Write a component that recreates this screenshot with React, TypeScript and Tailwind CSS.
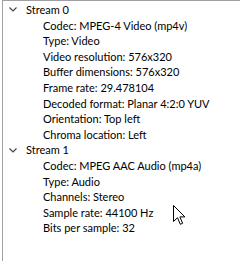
const streams = [
  {
    name: "Stream 0",
    props: [
      "Codec: MPEG-4 Video (mp4v)",
      "Type: Video",
      "Video resolution: 576x320",
      "Buffer dimensions: 576x320",
      "Frame rate: 29.478104",
      "Decoded format: Planar 4:2:0 YUV",
      "Orientation: Top left",
      "Chroma location: Left",
    ],
  },
  {
    name: "Stream 1",
    props: [
      "Codec: MPEG AAC Audio (mp4a)",
      "Type: Audio",
      "Channels: Stereo",
      "Sample rate: 44100 Hz",
      "Bits per sample: 32",
    ],
  },
];

const Chevron = () => (
  <svg width="8" height="5" viewBox="0 0 8 5" className="mr-[9px]">
    <path d="M0.5 0.5 L4 4 L7.5 0.5" fill="none" stroke="#444" strokeWidth="1.2" />
  </svg>
);

const Cursor = () => (
  <svg
    width="13"
    height="21"
    viewBox="0 0 13 21"
    className="absolute left-[173px] top-[205px]"
  >
    <path
      d="M0.5 0.5 L0.5 16.5 L4.5 12.7 L7.3 19.3 L9.6 18.3 L6.9 11.9 L11.9 11.9 Z"
      fill="#fff"
      stroke="#000"
      strokeWidth="1"
      strokeLinejoin="miter"
    />
  </svg>
);

export default function App() {
  return (
    <div className="relative w-[240px] h-[261px] bg-white overflow-hidden">
      <div
        className="ml-[2px] h-full border-l border-t border-[#a0a0a0] pt-[1px] text-[11px] leading-[15.6px] text-black"
        style={{ fontFamily: 'Lato, "Noto Sans", sans-serif' }}
      >
        {streams.map((s) => (
          <div key={s.name}>
            <div className="flex items-center pl-[6px]">
              <Chevron />
              <span>{s.name}</span>
            </div>
            {s.props.map((p) => (
              <div key={p} className="pl-[40px] whitespace-nowrap">
                {p}
              </div>
            ))}
          </div>
        ))}
      </div>
      <Cursor />
    </div>
  );
}
